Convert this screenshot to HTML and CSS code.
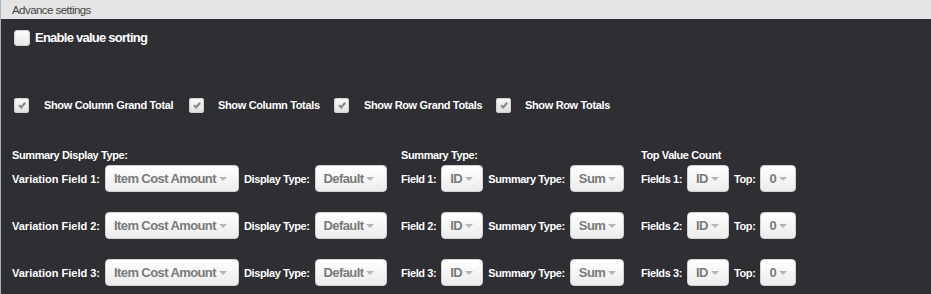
FILE: index.html
```html
<!DOCTYPE html>
<html>
<head>
<meta charset="utf-8">
<link rel="stylesheet" href="styles.css">
</head>
<body>
<div class="panel">
  <div class="header">Advance settings</div>
  <div class="content">
    <label class="sort-row"><span class="box"></span><span class="sort-label">Enable value sorting</span></label>

    <div class="checks">
      <label class="chk w1"><span class="box small"><svg viewBox="0 0 10 10" class="tick"><path d="M2 5.2 L4.2 7.3 L8.2 2.8" /></svg></span><span>Show Column Grand Total</span></label>
      <label class="chk w2"><span class="box small"><svg viewBox="0 0 10 10" class="tick"><path d="M2 5.2 L4.2 7.3 L8.2 2.8" /></svg></span><span>Show Column Totals</span></label>
      <label class="chk w3"><span class="box small"><svg viewBox="0 0 10 10" class="tick"><path d="M2 5.2 L4.2 7.3 L8.2 2.8" /></svg></span><span>Show Row Grand Totals</span></label>
      <label class="chk w4"><span class="box small"><svg viewBox="0 0 10 10" class="tick"><path d="M2 5.2 L4.2 7.3 L8.2 2.8" /></svg></span><span>Show Row Totals</span></label>
    </div>

    <div class="grid">
      <div class="title">Summary Display Type:</div>
      <div class="title">Summary Type:</div>
      <div class="title">Top Value Count</div>

      <div class="group"><span class="lbl wide">Variation Field 1:</span><span class="sel s-item">Item Cost Amount<i class="caret"></i></span><span class="lbl">Display Type:</span><span class="sel s-def">Default<i class="caret"></i></span></div>
      <div class="group"><span class="lbl">Field 1:</span><span class="sel s-id">ID<i class="caret"></i></span><span class="lbl">Summary Type:</span><span class="sel s-sum">Sum<i class="caret"></i></span></div>
      <div class="group"><span class="lbl">Fields 1:</span><span class="sel s-id">ID<i class="caret"></i></span><span class="lbl">Top:</span><span class="sel s-top">0<i class="caret"></i></span></div>

      <div class="group"><span class="lbl wide">Variation Field 2:</span><span class="sel s-item">Item Cost Amount<i class="caret"></i></span><span class="lbl">Display Type:</span><span class="sel s-def">Default<i class="caret"></i></span></div>
      <div class="group"><span class="lbl">Field 2:</span><span class="sel s-id">ID<i class="caret"></i></span><span class="lbl">Summary Type:</span><span class="sel s-sum">Sum<i class="caret"></i></span></div>
      <div class="group"><span class="lbl">Fields 2:</span><span class="sel s-id">ID<i class="caret"></i></span><span class="lbl">Top:</span><span class="sel s-top">0<i class="caret"></i></span></div>

      <div class="group"><span class="lbl wide">Variation Field 3:</span><span class="sel s-item">Item Cost Amount<i class="caret"></i></span><span class="lbl">Display Type:</span><span class="sel s-def">Default<i class="caret"></i></span></div>
      <div class="group"><span class="lbl">Field 3:</span><span class="sel s-id">ID<i class="caret"></i></span><span class="lbl">Summary Type:</span><span class="sel s-sum">Sum<i class="caret"></i></span></div>
      <div class="group"><span class="lbl">Fields 3:</span><span class="sel s-id">ID<i class="caret"></i></span><span class="lbl">Top:</span><span class="sel s-top">0<i class="caret"></i></span></div>
    </div>
  </div>
</div>
</body>
</html>
```
FILE: styles.css
```css
html, body {
  margin: 0;
  padding: 0;
  background: #2e2e33;
}
body {
  font-family: "Liberation Sans", Arial, sans-serif;
  width: 931px;
  height: 294px;
  overflow: hidden;
}
.panel {
  border-left: 1px solid #a3b3c2;
  height: 294px;
  box-sizing: border-box;
}
.header {
  height: 19px;
  background: #e4e4e4;
  color: #444;
  font-size: 11.5px;
  line-height: 20px;
  padding-left: 11px;
  letter-spacing: -0.55px;
}
.content {
  padding-left: 13px;
  padding-top: 10px;
}
.box {
  display: inline-block;
  width: 16px;
  height: 16px;
  border-radius: 4px;
  background: linear-gradient(#ffffff, #e6e6e6);
  box-shadow: inset 0 0 0 1px #d0d0d0;
  flex: none;
}
.sort-row {
  display: flex;
  align-items: center;
  gap: 5px;
  height: 17px;
}
.sort-label {
  color: #fff;
  font-weight: bold;
  font-size: 13px;
  letter-spacing: -0.75px;
}
.checks {
  display: flex;
  margin-top: 51px;
  height: 16px;
  align-items: center;
}
.chk {
  display: flex;
  align-items: center;
  gap: 15px;
  color: #fff;
  font-weight: bold;
  font-size: 11px;
  letter-spacing: -0.35px;
}
.chk.w1 { width: 175px; }
.chk.w2 { width: 145px; gap: 14px; }
.chk.w3 { width: 162px; gap: 15px; }
.chk.w4 { gap: 14px; }
.box.small {
  width: 15px;
  height: 15px;
  border-radius: 3px;
  display: flex;
  align-items: center;
  justify-content: center;
  background: linear-gradient(#fafafa, #dedede);
}
.tick {
  width: 10px;
  height: 10px;
}
.tick path {
  fill: none;
  stroke: #8a8a8a;
  stroke-width: 2.2;
}
.grid {
  display: grid;
  grid-template-columns: 389px 240px auto;
  margin-left: -2px;
  margin-top: 32px;
  row-gap: 20px;
}
.title {
  color: #fff;
  font-weight: bold;
  font-size: 11px;
  letter-spacing: -0.4px;
  height: 13px;
  line-height: 13px;
  margin-top: 4px;
  margin-bottom: -21px;
}
.group {
  display: flex;
  align-items: center;
  gap: 5px;
  height: 27px;
}
.lbl {
  color: #fff;
  font-weight: bold;
  font-size: 11px;
  letter-spacing: -0.4px;
  white-space: nowrap;
}
.lbl.wide {
  letter-spacing: 0;
}
.sel {
  display: flex;
  align-items: center;
  box-sizing: border-box;
  height: 27px;
  padding-left: 8px;
  border-radius: 4px;
  background: linear-gradient(#ffffff, #ececec);
  border: 1px solid #d2d2d2;
  color: #7a7a7a;
  font-weight: bold;
  font-size: 13px;
  letter-spacing: -0.6px;
  white-space: nowrap;
}
.caret {
  width: 0;
  height: 0;
  border-left: 4px solid transparent;
  border-right: 4px solid transparent;
  border-top: 4px solid #b5b5b5;
  margin-left: 3px;
}
.s-item { width: 134px; }
.s-def { width: 72px; }
.s-id { width: 42px; }
.s-sum { width: 54px; }
.s-top { width: 36px; }
```
